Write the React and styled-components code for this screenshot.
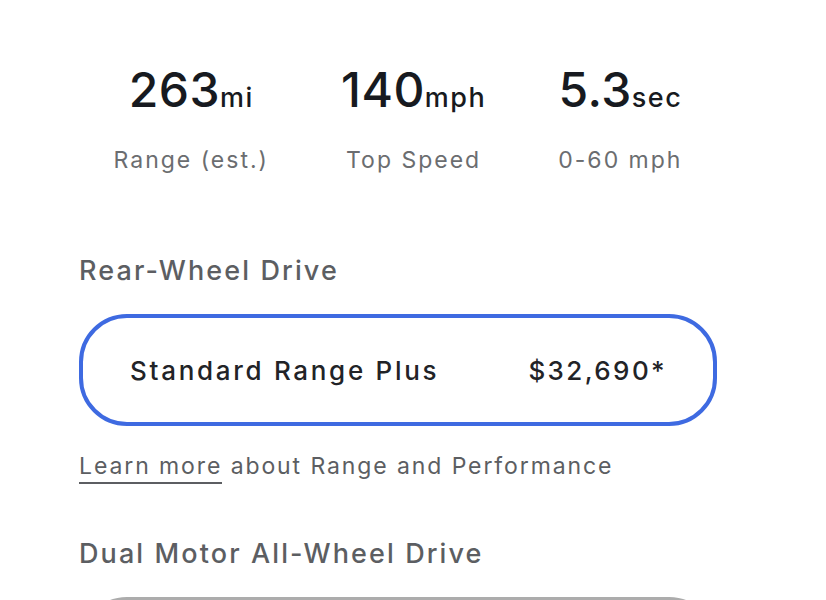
import React from "react";
import styled, { createGlobalStyle } from "styled-components";

const GlobalStyle = createGlobalStyle`
  html, body {
    margin: 0;
    padding: 0;
    background: #fff;
  }
  body {
    font-family: Inter, "Open Sans", "Liberation Sans", sans-serif;
    -webkit-font-smoothing: antialiased;
  }
`;

const specs = [
  { value: "263", unit: "mi", label: "Range (est.)" },
  { value: "140", unit: "mph", label: "Top Speed" },
  { value: "5.3", unit: "sec", label: "0-60 mph" },
];

function App() {
  return (
    <Page>
      <GlobalStyle />
      <Specs>
        {specs.map((s) => (
          <Spec key={s.label}>
            <Value>
              {s.value}
              <Unit>{s.unit}</Unit>
            </Value>
            <Label>{s.label}</Label>
          </Spec>
        ))}
      </Specs>

      <Heading>Rear-Wheel Drive</Heading>
      <Option selected>
        <OptionName>Standard Range Plus</OptionName>
        <Price>$32,690*</Price>
      </Option>
      <Note>
        <NoteLink href="#">Learn more</NoteLink> about Range and Performance
      </Note>

      <Heading $gap={58}>Dual Motor All-Wheel Drive</Heading>
      {/* next option card, only its top edge is in view */}
      <Option />
    </Page>
  );
}

const Page = styled.div`
  width: 638px;
  padding: 66px 0 40px 79px;
  box-sizing: content-box;
`;

const Specs = styled.div`
  display: flex;
  justify-content: center;
  gap: 72px;
`;

const Spec = styled.div`
  display: flex;
  flex-direction: column;
  align-items: center;
`;

const Value = styled.div`
  font-size: 48px;
  line-height: 48px;
  font-weight: 500;
  color: #171a20;
  letter-spacing: 0.5px;
`;

const Unit = styled.span`
  font-size: 27px;
  line-height: 0;
  font-weight: 500;
  letter-spacing: 1.5px;
`;

const Label = styled.div`
  margin-top: 33px;
  font-size: 23px;
  line-height: 26px;
  color: #6b6d70;
  letter-spacing: 2px;
`;

const Heading = styled.h2`
  margin: ${(p) => p.$gap || 82}px 0 0;
  font-size: 27px;
  line-height: 32px;
  font-weight: 500;
  color: #5c5e62;
  letter-spacing: 2.1px;
`;

const Option = styled.div`
  margin-top: 27px;
  height: 112px;
  box-sizing: border-box;
  border: ${(p) => (p.selected ? "4px solid #3e6ae1" : "3px solid #acacac")};
  border-radius: 48px;
  display: flex;
  align-items: center;
  justify-content: space-between;
  padding: 0 48px 0 47px;
`;

const OptionName = styled.span`
  font-size: 26px;
  font-weight: 500;
  color: #222327;
  letter-spacing: 2.7px;
`;

const Price = styled.span`
  font-size: 26px;
  font-weight: 500;
  color: #222327;
  letter-spacing: 2.4px;
  margin-right: -2px;
`;

const Note = styled.p`
  margin: 26px 0 0;
  font-size: 23px;
  line-height: 28px;
  color: #5c5e62;
  letter-spacing: 1.9px;
`;

const NoteLink = styled.a`
  color: inherit;
  text-decoration: none;
  border-bottom: 2px solid #5c5e62;
  padding-bottom: 2px;
`;

export default App;
